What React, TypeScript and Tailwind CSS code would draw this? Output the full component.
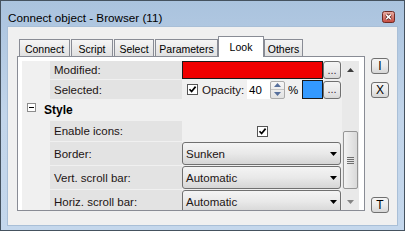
import React from 'react'

const tabs = [
  { label: 'Connect', w: 'w-[51px]', ml: 'ml-[2px]' },
  { label: 'Script', w: 'w-[42px]', ml: 'ml-[1px]' },
  { label: 'Select', w: 'w-[40px]', ml: 'ml-[1px]' },
  { label: 'Parameters', w: 'w-[63px]', ml: 'ml-[1px]' },
  { label: 'Look', w: 'w-[46px]', ml: 'ml-0', active: true },
  { label: 'Others', w: 'w-[39px]', ml: 'ml-0' },
]

function CloseButton() {
  return (
    <svg width="13" height="12" viewBox="0 0 13 12" className="mt-[10px] shrink-0">
      <defs>
        <linearGradient id="closeGrad" x1="0" y1="0" x2="0" y2="1">
          <stop offset="0" stopColor="#eab0a6" />
          <stop offset="1" stopColor="#c5493e" />
        </linearGradient>
      </defs>
      <rect x="0.5" y="0.5" width="12" height="11" rx="2" fill="url(#closeGrad)" stroke="#6e2a24" />
      <path d="M4.2 3.6 L8.8 8.2 M8.8 3.6 L4.2 8.2" stroke="#5a1f1a" strokeWidth="3" />
      <path d="M4.2 3.6 L8.8 8.2 M8.8 3.6 L4.2 8.2" stroke="#ffffff" strokeWidth="1.5" />
    </svg>
  )
}

function Tab({ label, w, ml, active }: { label: string; w: string; ml: string; active?: boolean }) {
  if (active) {
    return (
      <div className={`${w} ${ml} relative z-10 -mb-[1px] flex h-[21px] justify-center border border-b-0 border-[#898c95] bg-white pt-[4px]`}>
        <span className="text-[10.5px] leading-[12px]">{label}</span>
      </div>
    )
  }
  return (
    <div className={`${w} ${ml} flex h-[17px] justify-center border border-b-0 border-[#898c95] bg-gradient-to-b from-[#f5f5f5] to-[#e1e1e1] pt-[3px]`}>
      <span className="text-[10.5px] leading-[12px]">{label}</span>
    </div>
  )
}

function Row({ label, h, children }: { label: string; h: string; children?: React.ReactNode }) {
  return (
    <div className={`flex shrink-0 ${h}`}>
      <div className="w-[28px]" />
      <div className="flex w-[132px] items-center bg-[#e3e3e3] pl-[4px] text-[11.5px] text-[#1c1414]">
        <span className="leading-[14px]">{label}</span>
      </div>
      <div className="flex w-[160px] items-center">{children}</div>
    </div>
  )
}

function DotsButton() {
  return (
    <div className="flex h-[18px] w-[18px] items-center justify-center rounded-[3px] border border-[#707070] bg-gradient-to-b from-[#f4f4f4] via-[#ebebeb] to-[#d8d8d8]">
      <span className="text-[11px] leading-[11px] text-[#3a2a3a]">...</span>
    </div>
  )
}

function Check() {
  return (
    <div className="flex h-[11px] w-[11px] shrink-0 items-center justify-center border border-[#555] bg-white">
      <svg width="9" height="9" viewBox="0 0 9 9">
        <path d="M1.5 4.2 L3.6 6.5 L7.6 1.6" fill="none" stroke="#000" strokeWidth="1.7" />
      </svg>
    </div>
  )
}

function Combo({ value }: { value: string }) {
  return (
    <div className="flex h-full w-[159px] items-center justify-between rounded-[3px] border border-[#707070] bg-gradient-to-b from-[#f4f4f4] via-[#e9e9e9] to-[#d6d6d6] pl-[3px] pr-[3px]">
      <span className="text-[11.5px] leading-[14px] text-[#1c1414]">{value}</span>
      <svg width="7" height="4" viewBox="0 0 7 4">
        <path d="M0 0H7L3.5 4Z" fill="#000" />
      </svg>
    </div>
  )
}

function Spinner() {
  return (
    <div className="flex h-[18px] w-[15px] flex-col rounded-[2px] border border-[#ababab] bg-gradient-to-b from-[#f6f6f6] to-[#e2e2e2]">
      <div className="flex flex-1 items-center justify-center border-b border-[#c4c4c4]">
        <svg width="7" height="4" viewBox="0 0 7 4">
          <path d="M0 4H7L3.5 0Z" fill="#566f9c" />
        </svg>
      </div>
      <div className="flex flex-1 items-center justify-center">
        <svg width="7" height="4" viewBox="0 0 7 4">
          <path d="M0 0H7L3.5 4Z" fill="#566f9c" />
        </svg>
      </div>
    </div>
  )
}

function ScrollBar() {
  return (
    <div className="flex h-[149px] w-[17px] flex-col bg-[#e9e9e9]">
      <div className="flex h-[17px] shrink-0 items-center justify-center">
        <svg width="7" height="4" viewBox="0 0 7 4">
          <path d="M0 4H7L3.5 0Z" fill="#3c3c3c" />
        </svg>
      </div>
      <div className="h-[53px] shrink-0" />
      <div className="ml-[1px] flex h-[58px] w-[15px] shrink-0 flex-col items-center justify-center gap-[1px] rounded-[2px] border border-[#969696] bg-gradient-to-r from-[#f3f3f3] to-[#d9d9d9]">
        <div className="h-[1px] w-[7px] bg-[#6e6e6e]" />
        <div className="h-[1px] w-[7px] bg-[#6e6e6e]" />
        <div className="h-[1px] w-[7px] bg-[#6e6e6e]" />
        <div className="h-[1px] w-[7px] bg-[#6e6e6e]" />
      </div>
      <div className="h-[4px] shrink-0" />
      <div className="flex h-[17px] shrink-0 items-center justify-center">
        <svg width="7" height="4" viewBox="0 0 7 4">
          <path d="M0 0H7L3.5 4Z" fill="#858585" />
        </svg>
      </div>
    </div>
  )
}

function SideButton({ children, className = '' }: { children: React.ReactNode; className?: string }) {
  return (
    <div className={`flex h-[16px] w-[18px] items-center justify-center rounded-[3px] border border-[#707070] bg-gradient-to-b from-[#f4f4f4] via-[#ebebeb] to-[#d6d6d6] ${className}`}>
      <span className="text-[12px] leading-[12px]">{children}</span>
    </div>
  )
}

export default function App() {
  return (
    <div className="flex h-[231px] w-[405px] flex-col overflow-hidden border border-[#45525f] bg-gradient-to-b from-[#aac3de] via-[#c2d5ea] to-[#c4d7ec] font-['Liberation_Sans',Arial,sans-serif] text-black">
      {/* title bar */}
      <div className="flex h-[26px] shrink-0 items-start justify-between pl-[7px] pr-[9px]">
        <span className="mt-[10px] text-[11.7px] leading-[14px]">Connect object - Browser (11)</span>
        <CloseButton />
      </div>

      {/* client area */}
      <div className="mx-[7px] flex h-[198px] shrink-0 bg-[#f0f0f0] ring-1 ring-[#a9bfd7]">
        <div className="ml-[9px] flex w-[348px] flex-col pt-[9px]">
          <div className="flex h-[20px] items-end">
            {tabs.map((t) => (
              <Tab key={t.label} {...t} />
            ))}
          </div>

          <div className="h-[155px] border border-[#898c95] bg-white pl-[4px] pt-[4px]">
            <div className="flex h-[149px] w-[337px]">
              <div className="flex h-[149px] w-[320px] flex-col gap-[1px] overflow-hidden bg-[#f0f0f0]">
                <Row label="Modified:" h="h-[18px]">
                  <div className="h-[18px] w-[141px] border border-[#1a1a1a] bg-[#f00000]" />
                  <DotsButton />
                </Row>
                <Row label="Selected:" h="h-[19px]">
                  <div className="ml-[5px]">
                    <Check />
                  </div>
                  <span className="ml-[4px] w-[45px] text-[11.5px] leading-[14px] text-[#1c1414]">Opacity:</span>
                  <div className="flex h-full w-[23px] items-center bg-white pl-[2px] text-[11.5px] leading-[14px]">40</div>
                  <Spinner />
                  <span className="w-[17px] pl-[3px] text-[11.5px] leading-[14px]">%</span>
                  <div className="h-[19px] w-[21px] border border-[#1a1a1a] bg-[#3399ff]" />
                  <DotsButton />
                </Row>
                <div className="flex h-[20px] shrink-0 items-start">
                  <div className="ml-[5px] mt-[3px] flex h-[9px] w-[9px] items-center justify-center border border-[#8c8c8c] bg-white">
                    <div className="h-[1px] w-[5px] bg-black" />
                  </div>
                  <span className="ml-[8px] mt-[3px] text-[12px] font-bold leading-[14px]">Style</span>
                </div>
                <Row label="Enable icons:" h="h-[20px]">
                  <div className="flex w-full justify-center">
                    <Check />
                  </div>
                </Row>
                <Row label="Border:" h="h-[23px]">
                  <Combo value="Sunken" />
                </Row>
                <Row label="Vert. scroll bar:" h="h-[23px]">
                  <Combo value="Automatic" />
                </Row>
                <Row label="Horiz. scroll bar:" h="h-[23px]">
                  <Combo value="Automatic" />
                </Row>
              </div>
              <ScrollBar />
            </div>
          </div>
        </div>

        <div className="ml-[6px] flex w-[18px] flex-col pt-[31px]">
          <SideButton>I</SideButton>
          <SideButton className="mt-[8px]">X</SideButton>
          <SideButton className="mt-[99px]">T</SideButton>
        </div>
      </div>
    </div>
  )
}
